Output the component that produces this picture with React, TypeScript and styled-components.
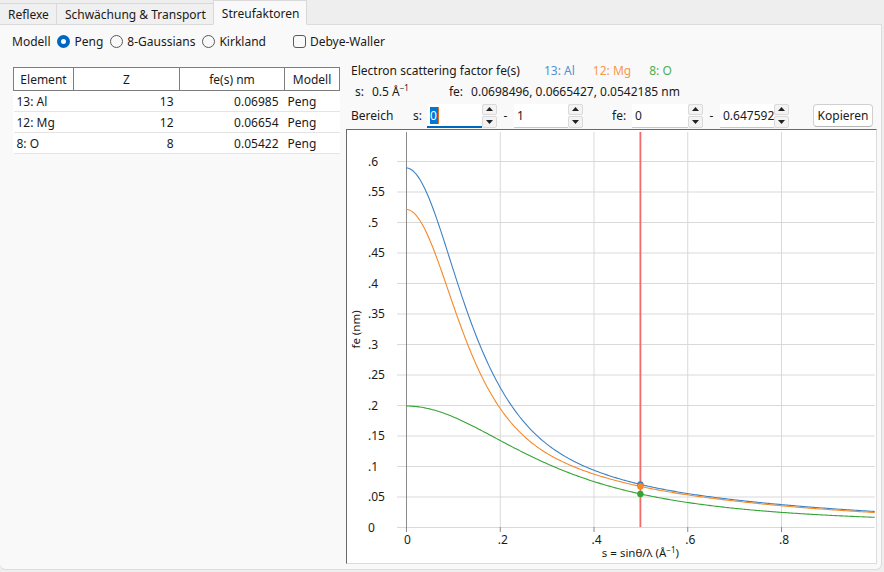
import React from 'react'
import styled, { createGlobalStyle } from 'styled-components'

const GlobalStyle = createGlobalStyle`
  body {
    margin: 0;
    background: #eeeeee;
    font-family: 'Noto Sans', 'Liberation Sans', sans-serif;
    font-size: 12px;
    color: #1a1a1a;
  }
`

type Elem = { name: string; z: number; fe: string; color: string; light: string; a: number[]; b: number[] }

const elements: Elem[] = [
  {
    name: '13: Al', z: 13, fe: '0.06985', color: '#3f82c4', light: '#4f93d2',
    a: [0.239, 0.6573, 1.2011, 2.5586, 1.2312],
    b: [0.3138, 2.1063, 10.4163, 34.4552, 98.5344],
  },
  {
    name: '12: Mg', z: 12, fe: '0.06654', color: '#f58a2a', light: '#f4994e',
    a: [0.2314, 0.6866, 0.9677, 2.1882, 1.1339],
    b: [0.3278, 2.272, 10.9241, 39.2898, 101.9748],
  },
  {
    name: '8: O', z: 8, fe: '0.05422', color: '#36a336', light: '#4faf4f',
    a: [0.0974, 0.2921, 0.691, 0.699, 0.2039],
    b: [0.2067, 1.3815, 4.6943, 12.7105, 32.4726],
  },
]

// Peng parametrisation, result in nm
const fe = (el: Elem, s: number) =>
  el.a.reduce((sum, a, i) => sum + a * Math.exp(-el.b[i] * s * s), 0) / 10

const X0 = 59
const Y0 = 397
const SX = 468.75
const SY = 610
const PLOT_R = X0 + SX
const PLOT_T = Y0 - 0.647592 * SY
const px = (s: number) => X0 + s * SX
const py = (v: number) => Y0 - v * SY

const yTicks = [0, 0.05, 0.1, 0.15, 0.2, 0.25, 0.3, 0.35, 0.4, 0.45, 0.5, 0.55, 0.6]
const xTicks = [0, 0.2, 0.4, 0.6, 0.8]
const fmt = (v: number) => (v === 0 ? '0' : String(+v.toFixed(2)).replace(/^0/, ''))

const Chart = () => {
  const curve = (el: Elem) => {
    const pts: string[] = []
    for (let i = 0; i <= 300; i++) {
      const s = i / 300
      pts.push(`${px(s).toFixed(2)},${py(fe(el, s)).toFixed(2)}`)
    }
    return pts.join(' ')
  }
  return (
    <ChartFrame>
      <svg width="529" height="433" style={{ display: 'block' }}>
        {yTicks.map((t) => (
          <g key={t}>
            <line x1={X0 - 9} x2={PLOT_R} y1={py(t) + 0.5} y2={py(t) + 0.5} stroke="#d9d9d9" />
            <text x={21} y={py(t) + 4.5} fontSize="12" fill="#1a1a1a" fontFamily="'Noto Sans', sans-serif">
              {fmt(t)}
            </text>
          </g>
        ))}
        {xTicks.slice(1).map((t) => (
          <g key={t}>
            <line x1={px(t) + 0.5} x2={px(t) + 0.5} y1={PLOT_T} y2={Y0} stroke="#d9d9d9" />
            <line x1={px(t) + 0.5} x2={px(t) + 0.5} y1={Y0} y2={Y0 + 5} stroke="#888" />
          </g>
        ))}
        <line x1={X0 + 0.5} x2={X0 + 0.5} y1={PLOT_T} y2={Y0 + 5} stroke="#8a8a8a" />
        {xTicks.map((t) => (
          <text key={t} x={px(t) - 2} y={Y0 + 17} fontSize="12" fill="#1a1a1a" fontFamily="'Noto Sans', sans-serif">
            {fmt(t)}
          </text>
        ))}
        <text x={(X0 + PLOT_R) / 2} y={Y0 + 30} fontSize="11.5" textAnchor="middle" fill="#1a1a1a" fontFamily="'Noto Sans', sans-serif">
          s = sinθ/λ (Å<tspan dy="-4" fontSize="8">−1</tspan><tspan dy="4">)</tspan>
        </text>
        <text transform={`translate(13 ${(PLOT_T + Y0) / 2}) rotate(-90)`} fontSize="11.5" textAnchor="middle" fill="#1a1a1a" fontFamily="'Noto Sans', sans-serif">
          fe (nm)
        </text>
        <line x1={px(0.5)} x2={px(0.5)} y1={PLOT_T} y2={Y0} stroke="#f26b6b" strokeWidth="1.8" />
        {elements.map((el) => (
          <polyline key={el.name} points={curve(el)} fill="none" stroke={el.color} strokeWidth="1.1" />
        ))}
        {elements.map((el) => (
          <circle key={el.name} cx={px(0.5)} cy={py(fe(el, 0.5))} r="3.2" fill={el.color} />
        ))}
      </svg>
    </ChartFrame>
  )
}

const Radio = ({ checked, label }: { checked?: boolean; label: string }) => (
  <Option>
    <RadioDot checked={checked} />
    {label}
  </Option>
)

const Spin = ({ value, focused, width }: { value: string; focused?: boolean; width: number }) => (
  <SpinBox>
    <SpinInput focused={focused} style={{ width }}>
      {focused ? <Selected>{value}</Selected> : value}
    </SpinInput>
    <SpinButtons>
      <SpinBtn>
        <svg width="7" height="4"><path d="M0 4 L3.5 0 L7 4 Z" fill="#222" /></svg>
      </SpinBtn>
      <SpinBtn>
        <svg width="7" height="4"><path d="M0 0 L3.5 4 L7 0 Z" fill="#222" /></svg>
      </SpinBtn>
    </SpinButtons>
  </SpinBox>
)

export default function App() {
  return (
    <Root>
      <GlobalStyle />
      <TabBar>
        <Tab>Reflexe</Tab>
        <Tab>Schwächung &amp; Transport</Tab>
        <Tab active>Streufaktoren</Tab>
      </TabBar>
      <Pane>
        <OptionsRow>
          <span>Modell</span>
          <Radio checked label="Peng" />
          <Radio label="8-Gaussians" />
          <Radio label="Kirkland" />
          <Option gapLeft={20}>
            <CheckBox />
            Debye-Waller
          </Option>
        </OptionsRow>
        <Body>
          <LeftCol>
            <Table>
              <thead>
                <tr>
                  <HeadCell w={60}>Element</HeadCell>
                  <HeadCell w={106}>Z</HeadCell>
                  <HeadCell w={105}>fe(s) nm</HeadCell>
                  <HeadCell w={55}>Modell</HeadCell>
                </tr>
              </thead>
              <tbody>
                {elements.map((el) => (
                  <tr key={el.name}>
                    <Cell>{el.name}</Cell>
                    <Cell right>{el.z}</Cell>
                    <Cell right>{el.fe}</Cell>
                    <Cell>Peng</Cell>
                  </tr>
                ))}
              </tbody>
            </Table>
          </LeftCol>
          <RightCol>
            <TitleRow>
              <Title>Electron scattering factor fe(s)</Title>
              {elements.map((el) => (
                <Legend key={el.name} color={el.light}>{el.name}</Legend>
              ))}
            </TitleRow>
            <InfoRow>
              <InfoLabel>s:</InfoLabel>
              <InfoValue w={77}>
                0.5 Å<sup>−1</sup>
              </InfoValue>
              <InfoLabel>fe:</InfoLabel>
              <InfoValue>0.0698496, 0.0665427, 0.0542185 nm</InfoValue>
            </InfoRow>
            <Controls>
              <Label w={62}>Bereich</Label>
              <Label w={14}>s:</Label>
              <Spin value="0" focused width={55} />
              <Dash>-</Dash>
              <Spin value="1" width={54} />
              <Label w={20} ml={29}>fe:</Label>
              <Spin value="0" width={56} />
              <Dash>-</Dash>
              <Spin value="0.647592" width={54} />
              <Button>Kopieren</Button>
            </Controls>
            <Chart />
          </RightCol>
        </Body>
      </Pane>
    </Root>
  )
}

const Root = styled.div`
  width: 884px;
  height: 572px;
  overflow: hidden;
`

const TabBar = styled.div`
  display: flex;
  align-items: flex-end;
  height: 25px;
  margin-bottom: -1px;
  position: relative;
  z-index: 1;
`

const Tab = styled.div<{ active?: boolean }>`
  height: ${(p) => (p.active ? 25 : 22)}px;
  line-height: ${(p) => (p.active ? 25 : 22)}px;
  padding: 0 7px 0 8px;
  box-sizing: border-box;
  background: ${(p) => (p.active ? '#f9f9f9' : '#f0f0f0')};
  border: 1px solid #d9d9d9;
  border-bottom: ${(p) => (p.active ? '1px solid #f9f9f9' : '1px solid #d9d9d9')};
  margin-left: -1px;
  white-space: nowrap;
  &:first-child {
    margin-left: 0;
    border-left: none;
  }
`

const Pane = styled.div`
  width: 882px;
  height: 546px;
  box-sizing: border-box;
  background: #f9f9f9;
  border: 1px solid #dcdcdc;
  border-left: none;
  border-radius: 0 0 6px 6px;
  display: flex;
  flex-direction: column;
`

const OptionsRow = styled.div`
  display: flex;
  align-items: center;
  height: 22px;
  margin-top: 5px;
  padding-left: 12px;
  gap: 7px;
`

const Option = styled.label<{ gapLeft?: number }>`
  display: flex;
  align-items: center;
  gap: 4px;
  margin-left: ${(p) => p.gapLeft || 0}px;
`

const RadioDot = styled.span<{ checked?: boolean }>`
  width: 13px;
  height: 13px;
  box-sizing: border-box;
  border-radius: 50%;
  border: ${(p) => (p.checked ? '4px solid #0067c0' : '1px solid #5a5a5a')};
  background: ${(p) => (p.checked ? '#ffffff' : '#f9f9f9')};
`

const CheckBox = styled.span`
  width: 13px;
  height: 13px;
  box-sizing: border-box;
  border: 1px solid #5a5a5a;
  border-radius: 3px;
  background: #f9f9f9;
`

const Body = styled.div`
  flex: 1;
  display: grid;
  grid-template-columns: 346px 1fr;
  margin-top: 8px;
  min-height: 0;
`

const LeftCol = styled.div`
  padding: 7px 0 0 13px;
`

const Table = styled.table`
  border-collapse: collapse;
  width: 326px;
  table-layout: fixed;
  background: #ffffff;
`

const HeadCell = styled.th<{ w: number }>`
  width: ${(p) => p.w}px;
  height: 23px;
  box-sizing: border-box;
  border: 1px solid #7e7e7e;
  font-weight: normal;
  padding: 0;
  text-align: center;
`

const Cell = styled.td<{ right?: boolean }>`
  height: 20px;
  padding: 0 ${(p) => (p.right ? 6 : 2)}px 0 ${(p) => (p.right ? 0 : 3)}px;
  text-align: ${(p) => (p.right ? 'right' : 'left')};
  border-bottom: 1px solid #e4e4e4;
`

const RightCol = styled.div`
  display: flex;
  flex-direction: column;
  padding-right: 3px;
  min-height: 0;
`

const TitleRow = styled.div`
  display: flex;
  align-items: center;
  height: 20px;
  padding-left: 5px;
`

const Title = styled.span`
  width: 193px;
`

const Legend = styled.span<{ color: string }>`
  color: ${(p) => p.color};
  margin-right: 18px;
`

const InfoRow = styled.div`
  display: flex;
  align-items: center;
  height: 22px;
  padding-left: 9px;
  sup {
    font-size: 8px;
    vertical-align: 5px;
  }
`

const InfoLabel = styled.span`
  margin-right: 8px;
`

const InfoValue = styled.span<{ w?: number }>`
  width: ${(p) => (p.w ? `${p.w}px` : 'auto')};
`

const Controls = styled.div`
  display: flex;
  align-items: center;
  height: 27px;
  padding-left: 5px;
`

const Label = styled.span<{ w: number; ml?: number }>`
  width: ${(p) => p.w}px;
  margin-left: ${(p) => p.ml || 0}px;
`

const Dash = styled.span`
  width: 17px;
  text-align: center;
`

const SpinBox = styled.div`
  display: flex;
  height: 24px;
`

const SpinInput = styled.div<{ focused?: boolean }>`
  box-sizing: border-box;
  background: #ffffff;
  border-bottom: ${(p) => (p.focused ? '2px solid #0067c0' : '1px solid #c8c8c8')};
  padding: 3px 0 0 3px;
  line-height: 17px;
  overflow: hidden;
  white-space: nowrap;
`

const Selected = styled.span`
  background: #0078d7;
  color: #ffffff;
  padding-right: 1px;
  border-right: 1px solid #e07020;
`

const SpinButtons = styled.div`
  display: flex;
  flex-direction: column;
  width: 15px;
  gap: 1px;
  background: #f9f9f9;
`

const SpinBtn = styled.div`
  flex: 1;
  display: flex;
  align-items: center;
  justify-content: center;
  background: #f3f3f3;
  border: 1px solid #dadada;
  border-radius: 2px;
`

const Button = styled.button`
  margin-left: 24px;
  width: 60px;
  height: 23px;
  font: inherit;
  color: #1a1a1a;
  background: #ffffff;
  border: 1px solid #d0d0d0;
  border-bottom-color: #b8b8b8;
  border-radius: 4px;
  padding: 0;
`

const ChartFrame = styled.div`
  background: #ffffff;
  border-top: 1px solid #6a6a6a;
  border-left: 1px solid #6a6a6a;
  border-right: 1px solid #dcdcdc;
  border-bottom: 1px solid #dcdcdc;
  width: 531px;
  height: 435px;
  box-sizing: border-box;
  margin-top: 0px;
`
